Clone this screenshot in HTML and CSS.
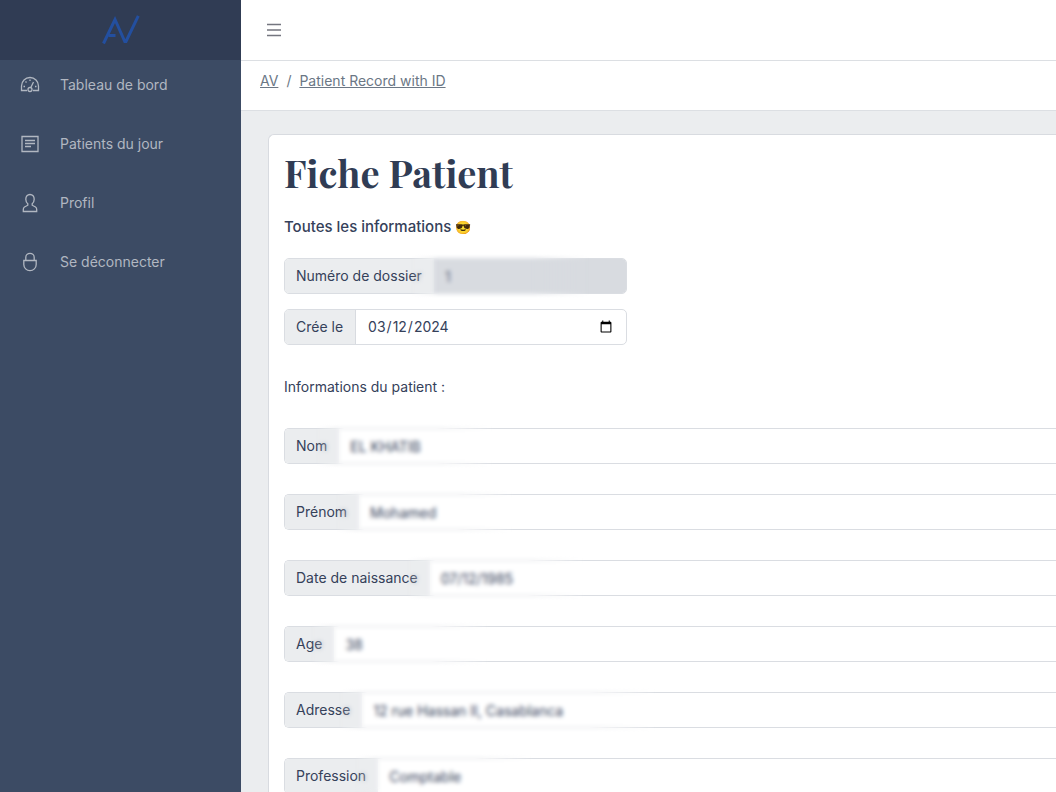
FILE: index.html
```html
<!DOCTYPE html>
<html lang="en">
<head>
  <meta charset="UTF-8">
  <meta name="viewport" content="width=device-width, initial-scale=1.0">
  <title>Fiche Patient</title>
  <link rel="stylesheet" href="styles.css">
</head>
<body>
  <aside class="sidebar">
    <a class="brand" href="#" aria-label="AV">
      <svg width="38" height="30" viewBox="0 0 38 30" fill="none" stroke="#234f9f" stroke-width="3">
        <path d="M1.500 28.500 13 4.500 22.800 26.500H24L36.300 .800"/>
        <path d="M6.500 20.500H13.500"/>
      </svg>
    </a>
    <nav class="menu">
      <a href="#">
        <svg class="icon" viewBox="0 0 20 20">
          <path d="M7 15.500H1.500V11a8.500 8.500 0 0 1 17 0v4.500H13"/>
          <circle cx="10" cy="14.500" r="2"/>
          <path d="M10.800 12.500 13.500 7M10 4.500v1.500M5.500 6.500l1 1M3.500 11.500H5M15 11.500h1.500"/>
        </svg>
        <span>Tableau de bord</span>
      </a>
      <a href="#">
        <svg class="icon" viewBox="0 0 20 20">
          <path d="M2 2.500h16v15H2zM5 6.500h10M5 9.500h10M5 12.500h6"/>
        </svg>
        <span>Patients du jour</span>
      </a>
      <a href="#">
        <svg class="icon" viewBox="0 0 20 20">
          <path d="M10 1.500c-2.600 0-4.200 1.900-4.200 4.700 0 2 .8 3.500 2 4.600v1.400L4.500 14c-1 .6-1.200 1.400-1.200 2.500v2h13.400v-2c0-1.100-.2-1.900-1.200-2.500l-3.300-1.800v-1.400c1.200-1.100 2-2.600 2-4.600 0-2.800-1.600-4.700-4.200-4.700z"/>
        </svg>
        <span>Profil</span>
      </a>
      <a href="#">
        <svg class="icon" viewBox="0 0 20 20">
          <path d="M3.800 8.500h12.400v4a6.200 6.200 0 0 1-12.400 0zM5.800 8.500V5.500a4.200 4.200 0 0 1 8.400 0v3"/>
        </svg>
        <span>Se déconnecter</span>
      </a>
    </nav>
  </aside>

  <div class="wrapper">
    <header class="topbar">
      <button class="toggler" type="button" aria-label="Menu">
        <svg width="14" height="14" viewBox="0 0 14 14" stroke="#74767f" stroke-width="1.300">
          <path d="M0 1.500h14M0 7h14M0 12.500h14"/>
        </svg>
      </button>
    </header>
    <nav class="breadcrumb">
      <a href="#">AV</a>
      <span>/</span>
      <a href="#">Patient Record with ID</a>
    </nav>

    <main class="content">
      <form class="card">
        <h1>Fiche Patient</h1>
        <p class="lead">Toutes les informations <span class="emoji">😎</span></p>

        <div class="input-group short">
          <label for="dossier">Numéro de dossier</label>
          <div class="field hidden-value disabled"><input id="dossier" type="text" value="1" disabled></div>
        </div>
        <div class="input-group short">
          <label for="cree">Crée le</label>
          <div class="field divided"><input id="cree" type="date" value="2024-03-12"></div>
        </div>

        <p class="section">Informations du patient :</p>

        <div class="patient">
          <div class="input-group">
            <label for="nom">Nom</label>
            <div class="field hidden-value"><input id="nom" type="text" value="EL KHATIB"></div>
          </div>
          <div class="input-group">
            <label for="prenom">Prénom</label>
            <div class="field hidden-value"><input id="prenom" type="text" value="Mohamed"></div>
          </div>
          <div class="input-group">
            <label for="naissance">Date de naissance</label>
            <div class="field hidden-value"><input id="naissance" type="text" value="07/12/1985"></div>
          </div>
          <div class="input-group">
            <label for="age">Age</label>
            <div class="field hidden-value"><input id="age" type="text" value="38"></div>
          </div>
          <div class="input-group">
            <label for="adresse">Adresse</label>
            <div class="field hidden-value wide"><input id="adresse" type="text" value="12 rue Hassan II, Casablanca"></div>
          </div>
          <div class="input-group">
            <label for="profession">Profession</label>
            <div class="field hidden-value"><input id="profession" type="text" value="Comptable"></div>
          </div>
        </div>
      </form>
    </main>
  </div>
</body>
</html>
```

FILE: styles.css
```css
* {
  box-sizing: border-box;
}
body {
  margin: 0;
  display: flex;
  height: 100vh;
  overflow: hidden;
  font-family: Inter, "Liberation Sans", sans-serif;
  font-size: 14px;
  line-height: 24px;
  color: #35415a;
  background: #ebedef;
}
.sidebar {
  flex: 0 0 241px;
  background: #3c4b64;
}
.brand {
  display: flex;
  align-items: center;
  justify-content: center;
  height: 60px;
  background: #303c54;
}
.menu {
  display: flex;
  flex-direction: column;
  gap: 9px;
}
.menu a {
  display: flex;
  align-items: center;
  gap: 20px;
  height: 50px;
  padding: 0 20px;
  color: #b1b7c1;
  text-decoration: none;
}
.icon {
  width: 20px;
  height: 20px;
  fill: none;
  stroke: currentColor;
  stroke-width: 1.3;
}
.wrapper {
  flex: 1;
  min-width: 0;
}
.topbar {
  display: flex;
  align-items: center;
  height: 61px;
  padding: 0 26px;
  background: #fff;
  border-bottom: 1px solid #dcdfe3;
}
.toggler {
  display: flex;
  padding: 0;
  border: 0;
  background: none;
}
.breadcrumb {
  display: flex;
  gap: 8px;
  height: 50px;
  padding: 8px 19px;
  background: #fff;
  border-bottom: 1px solid #dcdfe3;
  color: #6b7785;
}
.breadcrumb a {
  color: #6b7785;
}
/* the card and its long fields run off the right side */
.content {
  padding: 23px 0 0 27px;
}
.card {
  padding: 16px 0 16px 15px;
  background: #fff;
  border: 1px solid #d8dbe0;
  border-right: 0;
  border-radius: 6px 0 0 6px;
}
h1 {
  margin: 0 0 20px;
  font-family: "Playfair Display", "Liberation Serif", serif;
  font-size: 38px;
  line-height: 44px;
  color: #303c54;
}
.lead {
  margin: 0 0 19px;
  font-size: 15px;
  font-weight: 500;
}
.emoji {
  font-size: 13px;
}
.section {
  margin: 30px 0 29px;
}
.input-group {
  display: flex;
  height: 36px;
  border: 1px solid #dadde2;
  border-right: 0;
  border-radius: 5px 0 0 5px;
}
.input-group.short {
  width: 343px;
  margin-bottom: 15px;
  border-right: 1px solid #dadde2;
  border-radius: 5px;
}
.input-group label {
  display: flex;
  align-items: center;
  padding: 0 12px 0 11px;
  background: #ebedef;
  border-radius: 4px 0 0 4px;
  white-space: nowrap;
}
.field {
  position: relative;
  flex: 1;
  min-width: 0;
}
.field.divided {
  border-left: 1px solid #d8dbe0;
}
.field.disabled {
  background: #d8dbe0;
  border-radius: 0 4px 4px 0;
}
.field input {
  width: 100%;
  height: 34px;
  padding: 0 11px;
  border: 0;
  outline: 0;
  background: none;
  font: inherit;
  color: #35415a;
}
.field.disabled input {
  color: #5c6678;
}
/* soft patch over private values */
.hidden-value::after {
  content: "";
  position: absolute;
  top: -8px;
  bottom: -8px;
  left: -24px;
  width: 180px;
  backdrop-filter: blur(2px);
  -webkit-mask-image: linear-gradient(to right, transparent, #000 30px, #000 120px, transparent);
  mask-image: linear-gradient(to right, transparent, #000 30px, #000 120px, transparent);
  pointer-events: none;
}
.hidden-value.wide::after {
  width: 320px;
  -webkit-mask-image: linear-gradient(to right, transparent, #000 30px, #000 250px, transparent);
  mask-image: linear-gradient(to right, transparent, #000 30px, #000 250px, transparent);
}
.patient {
  display: flex;
  flex-direction: column;
  gap: 30px;
}
```
